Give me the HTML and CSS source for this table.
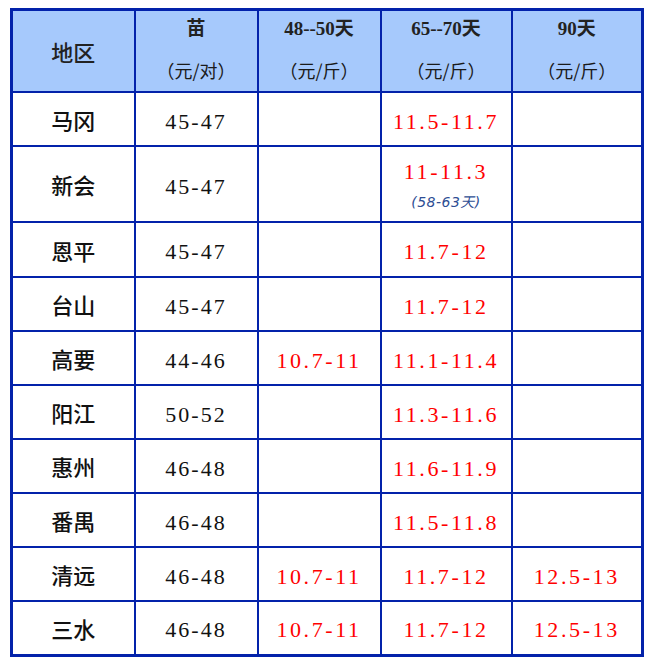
FILE: index.html
```html
<!DOCTYPE html>
<html lang="zh">
<head>
<meta charset="utf-8">
<link rel="stylesheet" href="styles.css">
</head>
<body>
<table class="price">
  <colgroup>
    <col class="c1"><col class="c2"><col class="c3"><col class="c4"><col class="c5">
  </colgroup>
  <thead>
    <tr class="head">
      <th class="region-h">地区</th>
      <th><div class="l1">苗</div><div class="l2">（元/对）</div></th>
      <th><div class="l1">48--50天</div><div class="l2">（元/斤）</div></th>
      <th><div class="l1">65--70天</div><div class="l2">（元/斤）</div></th>
      <th><div class="l1">90天</div><div class="l2">（元/斤）</div></th>
    </tr>
  </thead>
  <tbody>
    <tr><td class="name">马冈</td><td class="num">45-47</td><td></td><td class="red">11.5-11.7</td><td></td></tr>
    <tr class="tall"><td class="name">新会</td><td class="num">45-47</td><td></td><td class="red"><div class="top">11-11.3</div><div class="note">(58-63天)</div></td><td></td></tr>
    <tr class="r55"><td class="name">恩平</td><td class="num">45-47</td><td></td><td class="red">11.7-12</td><td></td></tr>
    <tr><td class="name">台山</td><td class="num">45-47</td><td></td><td class="red">11.7-12</td><td></td></tr>
    <tr><td class="name">高要</td><td class="num">44-46</td><td class="red">10.7-11</td><td class="red">11.1-11.4</td><td></td></tr>
    <tr><td class="name">阳江</td><td class="num">50-52</td><td></td><td class="red">11.3-11.6</td><td></td></tr>
    <tr><td class="name">惠州</td><td class="num">46-48</td><td></td><td class="red">11.6-11.9</td><td></td></tr>
    <tr><td class="name">番禺</td><td class="num">46-48</td><td></td><td class="red">11.5-11.8</td><td></td></tr>
    <tr><td class="name">清远</td><td class="num">46-48</td><td class="red">10.7-11</td><td class="red">11.7-12</td><td class="red">12.5-13</td></tr>
    <tr><td class="name">三水</td><td class="num">46-48</td><td class="red">10.7-11</td><td class="red">11.7-12</td><td class="red">12.5-13</td></tr>
  </tbody>
</table>
</body>
</html>
```
FILE: styles.css
```css
html, body {
  margin: 0;
  padding: 0;
  background: #ffffff;
}
body {
  padding: 8px 0 0 10px;
  font-family: "Liberation Serif", "Noto Sans CJK SC", serif;
}
.price {
  border-collapse: collapse;
  table-layout: fixed;
  width: 633px;
  border: 3px solid #0322aa;
}
.c1, .c2, .c3 { width: 123px; }
.c4, .c5 { width: 131px; }
.price th, .price td {
  border: 2px solid #0322aa;
  padding: 0;
  text-align: center;
  vertical-align: middle;
}
.head th {
  background: #a6c9fc;
  height: 76px;
  color: #222222;
  font-size: 19px;
  font-weight: bold;
  padding-bottom: 4px;
}
.head .l1 {
  line-height: 24px;
  margin-bottom: 17px;
}
.head .l2 {
  line-height: 24px;
  font-weight: normal;
  font-family: "Noto Sans CJK SC", sans-serif;
  font-size: 18px;
  color: #1a1a1a;
}
.head .region-h {
  font-family: "Noto Sans CJK SC", sans-serif;
  font-size: 22px;
  font-weight: 500;
  padding-bottom: 0;
}
tbody tr { height: 54px; }
tbody tr.tall { height: 76px; }
tbody tr.r55 { height: 55px; }
.name {
  font-family: "Noto Sans CJK SC", sans-serif;
  font-size: 22px;
  font-weight: 500;
  color: #111111;
  padding-top: 2px;
}
.price td.num {
  font-size: 22px;
  color: #111111;
  letter-spacing: 2px;
  padding-top: 5px;
}
.price td.red {
  font-size: 22px;
  color: #ff0000;
  letter-spacing: 2.6px;
  padding-top: 5px;
}
.red .top {
  line-height: 26px;
  margin-top: -4px;
}
.red .note {
  font-family: "DejaVu Sans", "Noto Sans CJK SC", sans-serif;
  font-style: italic;
  font-size: 14px;
  letter-spacing: 0.5px;
  color: #2e4e94;
  line-height: 18px;
  margin-top: 8px;
}
```
